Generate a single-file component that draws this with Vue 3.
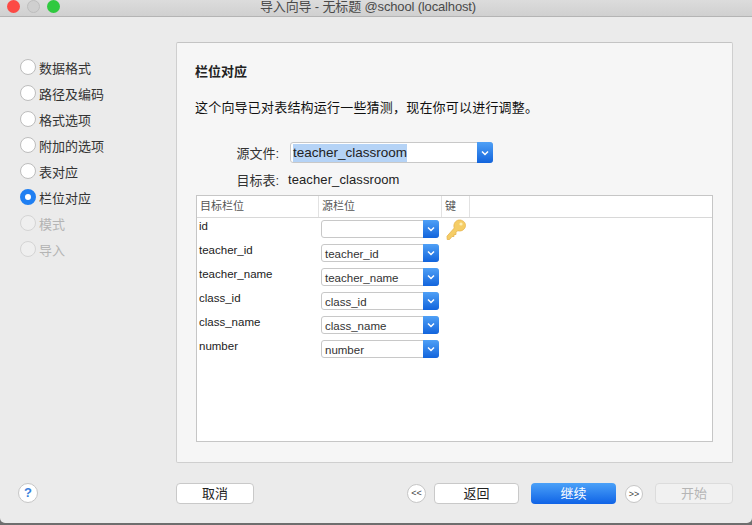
<script setup>
const steps = [
  { label: '数据格式' },
  { label: '路径及编码' },
  { label: '格式选项' },
  { label: '附加的选项' },
  { label: '表对应' },
  { label: '栏位对应', active: true },
  { label: '模式', disabled: true },
  { label: '导入', disabled: true },
]
const rows = [
  { target: 'id', source: '', key: true },
  { target: 'teacher_id', source: 'teacher_id' },
  { target: 'teacher_name', source: 'teacher_name' },
  { target: 'class_id', source: 'class_id' },
  { target: 'class_name', source: 'class_name' },
  { target: 'number', source: 'number' },
]
</script>

<template>
  <div class="screen">
    <div class="window">
      <header class="titlebar">
        <div class="lights">
          <span class="light red"></span>
          <span class="light gray"></span>
          <span class="light green"></span>
        </div>
        <span class="title">导入向导 - 无标题 @school (localhost)</span>
      </header>

      <div class="main">
        <aside class="sidebar">
          <div
            v-for="s in steps"
            :key="s.label"
            class="step"
            :class="{ disabled: s.disabled, active: s.active }"
          >
            <span class="radio"></span>
            <span>{{ s.label }}</span>
          </div>
        </aside>

        <section class="panel">
          <h1 class="heading">栏位对应</h1>
          <p class="desc">这个向导已对表结构运行一些猜测，现在你可以进行调整。</p>

          <div class="form-row source-row">
            <span class="form-label">源文件:</span>
            <div class="combo big">
              <span class="combo-text"><span class="selected">teacher_classroom</span></span>
              <span class="combo-btn">
                <svg width="10" height="6" viewBox="0 0 10 6"><path d="M2 1.5 5 4.500 8 1.500" fill="none" stroke="#fff" stroke-width="1.5"/></svg>
              </span>
            </div>
          </div>
          <div class="form-row target-row">
            <span class="form-label">目标表:</span>
            <span class="target-value">teacher_classroom</span>
          </div>

          <div class="table">
            <div class="thead">
              <span class="th col-a">目标栏位</span>
              <span class="th col-b">源栏位</span>
              <span class="th col-c">键</span>
            </div>
            <div v-for="r in rows" :key="r.target" class="tr">
              <span class="cell-target col-a">{{ r.target }}</span>
              <div class="col-b cell-source">
                <div class="combo small">
                  <span class="combo-text">{{ r.source }}</span>
                  <span class="combo-btn">
                    <svg width="10" height="6" viewBox="0 0 10 6"><path d="M2 1.5 5 4.500 8 1.500" fill="none" stroke="#fff" stroke-width="1.5"/></svg>
                  </span>
                </div>
              </div>
              <div class="col-c cell-key">
                <svg v-if="r.key" width="21" height="22" viewBox="0 0 21 22">
                  <path d="M13.500 1c3.200 0 6 2.300 6 5.400 0 3.200-2.800 5.600-6 5.600-.7 0-1.300-.1-1.900-.3L10 13.500 10 15.500 8 15.500 8 17.500 6 17.500 3.500 20.500 1.200 20.500 1 17.200 8.300 9c-.3-.7-.4-1.300-.4-2C7.900 3.600 10.400 1 13.500 1z" fill="#f5cd66" stroke="#e6b44e" stroke-width=".8"/>
                  <circle cx="15" cy="5" r="1.600" fill="#fdeeb4"/>
                </svg>
              </div>
              <span class="col-rest"></span>
            </div>
          </div>
        </section>
      </div>

      <footer class="footer">
        <div class="footer-left">
          <span class="help">?</span>
        </div>
        <div class="footer-right">
          <button class="btn cancel">取消</button>
          <div class="nav">
            <span class="round">&lt;&lt;</span>
            <button class="btn back">返回</button>
            <button class="btn primary">继续</button>
            <span class="round next">&gt;&gt;</span>
            <button class="btn start">开始</button>
          </div>
        </div>
      </footer>
    </div>
  </div>
</template>

<style>
html, body { margin: 0; background: #8e8e8e; }
</style>

<style scoped>
.screen {
  width: 752px;
  height: 525px;
  overflow: hidden;
  background: linear-gradient(#cfcfcf 0, #6e6e6e 100%);
  font-family: "Liberation Sans", "Noto Sans CJK SC", sans-serif;
  color: #1d1d1d;
}
.window {
  height: 523px;
  background: #ebebeb;
  display: flex;
  flex-direction: column;
  border-radius: 0 0 5px 5px;
}
.titlebar {
  height: 16px;
  flex: none;
  display: flex;
  align-items: center;
  position: relative;
  background: linear-gradient(#dcdcdc, #d0d0d0);
  border-bottom: 1px solid #b4b4b4;
}
.lights {
  display: flex;
  gap: 7px;
  padding-left: 7px;
  margin-top: -4px;
}
.light {
  width: 13px;
  height: 13px;
  border-radius: 50%;
}
.red { background: #fc4a45; }
.gray { background: #cfcfcf; border: 1px solid #bdbdbd; box-sizing: border-box; }
.green { background: #2fc93f; }
.title {
  position: absolute;
  left: 0;
  right: 16px;
  top: 0;
  text-align: center;
  font-size: 13px;
  letter-spacing: -0.15px;
  line-height: 13px;
  color: #4a4a4a;
}
.main {
  flex: none;
  height: 445px;
  display: flex;
  padding-top: 25px;
  box-sizing: border-box;
}
.sidebar {
  width: 176px;
  flex: none;
  padding: 12px 0 0 20px;
  box-sizing: border-box;
}
.step {
  height: 26px;
  display: flex;
  align-items: center;
  gap: 3px;
  font-size: 13px;
  color: #333;
}
.radio {
  width: 16px;
  height: 16px;
  flex: none;
  border-radius: 50%;
  background: #fff;
  border: 1px solid #bdbdbd;
  box-sizing: border-box;
}
.step.active .radio {
  border: 5px solid #1f7ff2;
}
.step.disabled { color: #b4b4b4; }
.step.disabled .radio {
  background: #efefef;
  border-color: #d4d4d4;
}
.panel {
  width: 557px;
  height: 421px;
  flex: none;
  box-sizing: border-box;
  background: #f6f6f6;
  border: 1px solid #cfcfcf;
  border-top-color: #c4c4c4;
  border-radius: 2px;
  padding: 0 19px;
}
.heading {
  margin: 20px 0 0 -1px;
  font-size: 13px;
  line-height: 18px;
  font-weight: 700;
  color: #222;
}
.desc {
  margin: 18px 0 0 -1px;
  font-size: 13px;
  letter-spacing: 0.2px;
  line-height: 18px;
  color: #111;
}
.form-row {
  display: flex;
  align-items: center;
}
.source-row { margin-top: 25px; }
.target-row { margin-top: 7px; }
.form-label {
  width: 83px;
  box-sizing: border-box;
  text-align: right;
  font-size: 13px;
  color: #333;
}
.target-value {
  margin-left: 9px;
  font-size: 13px;
  letter-spacing: 0.1px;
  color: #222;
}
.combo {
  display: flex;
  box-sizing: border-box;
  background: #fff;
  border: 1px solid #c8c8c8;
  border-radius: 3px;
}
.combo.big {
  width: 203px;
  height: 21px;
  margin-left: 11px;
  font-size: 13.5px;
}
.combo.small {
  width: 118px;
  height: 18px;
  font-size: 11.5px;
}
.combo-text {
  flex: 1;
  min-width: 0;
  padding-left: 3px;
  display: flex;
  align-items: center;
  color: #333;
}
.big .combo-text { color: #222; padding-left: 2px; }
.small .combo-text { padding-top: 2px; }
.selected {
  background: #b5d3f6;
  line-height: 18px;
}
.combo-btn {
  flex: none;
  width: 16px;
  margin: -1px -1px -1px 0;
  border-radius: 0 3px 3px 0;
  background: linear-gradient(#4fa0f6, #1264dc);
  display: flex;
  align-items: center;
  justify-content: center;
}
.table {
  margin-top: 6px;
  width: 517px;
  height: 247px;
  box-sizing: border-box;
  background: #fff;
  border: 1px solid #c6c6c6;
}
.thead {
  display: flex;
  height: 22px;
  box-sizing: border-box;
  border-bottom: 1px solid #d8d8d8;
}
.th {
  font-size: 11px;
  line-height: 20px;
  color: #555;
  padding-left: 3px;
  box-sizing: border-box;
  border-right: 1px solid #e2e2e2;
}
.col-a { width: 122px; flex: none; }
.col-b { width: 123px; flex: none; }
.col-c { width: 28px; flex: none; }
.tr {
  display: flex;
  height: 24px;
  box-sizing: border-box;
  padding-top: 2px;
}
.cell-target {
  padding-left: 2px;
  margin-top: -1px;
  box-sizing: border-box;
  font-size: 11.5px;
  line-height: 14px;
  color: #222;
}
.cell-source { padding-left: 2px; box-sizing: border-box; }
.cell-key { margin-top: -1px; padding-left: 4px; box-sizing: border-box; }
.footer {
  flex: none;
  height: 62px;
  display: flex;
  align-items: flex-start;
  padding-top: 21px;
  box-sizing: border-box;
}
.footer-left { width: 176px; flex: none; padding-left: 18px; box-sizing: border-box; }
.help {
  width: 20px;
  height: 20px;
  display: block;
  box-sizing: border-box;
  border-radius: 50%;
  background: #fff;
  border: 1px solid #c6c6c6;
  text-align: center;
  font-size: 13px;
  font-weight: 700;
  line-height: 18px;
  color: #3a7fdc;
}
.footer-right {
  width: 557px;
  flex: none;
  display: flex;
  justify-content: space-between;
  align-items: center;
}
.nav {
  display: flex;
  align-items: center;
}
.btn {
  height: 21px;
  padding: 0;
  box-sizing: border-box;
  background: #fff;
  border: 1px solid #c9c9c9;
  border-radius: 4px;
  font: 13px/19px "Liberation Sans", "Noto Sans CJK SC", sans-serif;
  color: #222;
}
.cancel { width: 78px; }
.back { width: 85px; margin-left: 8px; }
.primary {
  width: 85px;
  margin-left: 12px;
  border: none;
  background: linear-gradient(#4ba1f8, #0f63e6);
  color: #fff;
}
.start {
  width: 78px;
  margin-left: 12px;
  background: #f1f1f1;
  border-color: #dcdcdc;
  color: #b5b5b5;
}
.round {
  width: 19px;
  height: 19px;
  box-sizing: border-box;
  border-radius: 50%;
  background: #fff;
  border: 1px solid #c6c6c6;
  font-size: 9px;
  line-height: 16px;
  text-align: center;
  color: #444;
}
.round.next { margin-left: 9px; width: 18px; height: 18px; }
</style>
